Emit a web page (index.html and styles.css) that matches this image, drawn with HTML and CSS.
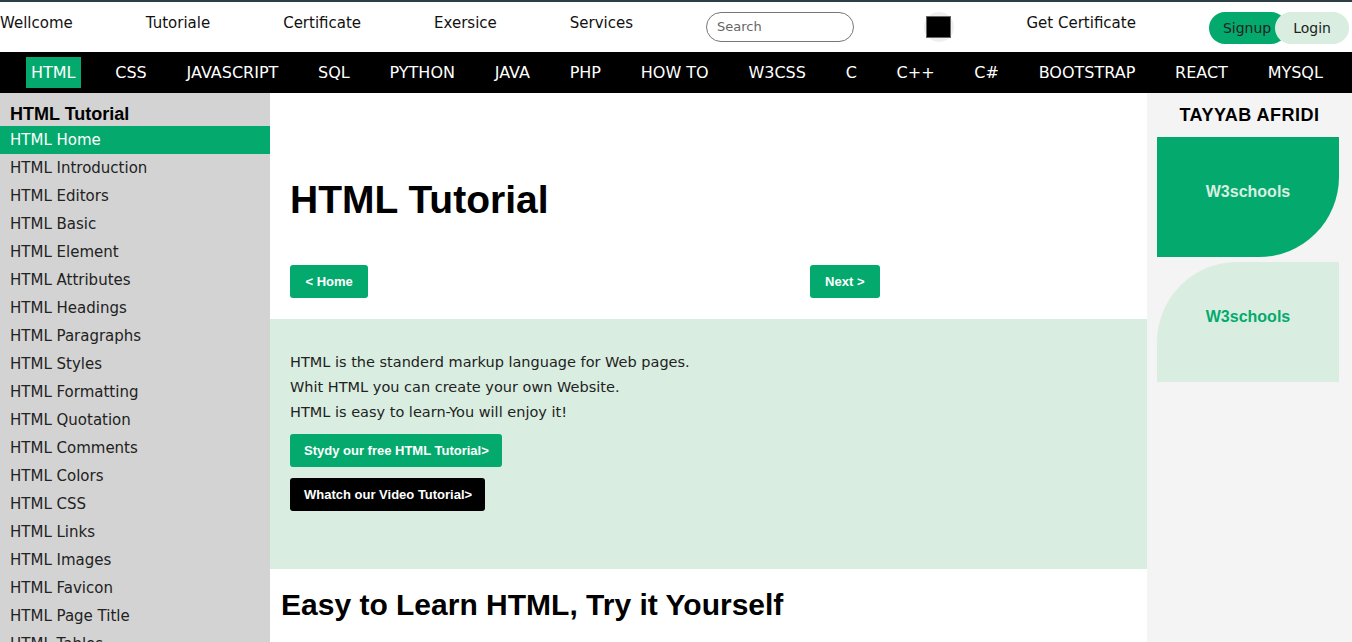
FILE: index.html
```html
<!DOCTYPE html>
<html>
<head>
<meta charset="utf-8">
<title>HTML Tutorial</title>
<link rel="stylesheet" href="styles.css">
</head>
<body>
<header class="topbar">
  <a class="top-link">Wellcome</a>
  <a class="top-link">Tutoriale</a>
  <a class="top-link">Certificate</a>
  <a class="top-link">Exersice</a>
  <a class="top-link">Services</a>
  <div class="search">Search</div>
  <div class="swatch-wrap"><div class="swatch"></div></div>
  <a class="top-link">Get Certificate</a>
  <div class="auth">
    <span class="signup">Signup</span>
    <span class="login">Login</span>
  </div>
</header>
<nav class="navbar">
  <a class="nav-item active">HTML</a>
  <a class="nav-item">CSS</a>
  <a class="nav-item">JAVASCRIPT</a>
  <a class="nav-item">SQL</a>
  <a class="nav-item">PYTHON</a>
  <a class="nav-item">JAVA</a>
  <a class="nav-item">PHP</a>
  <a class="nav-item">HOW TO</a>
  <a class="nav-item">W3CSS</a>
  <a class="nav-item">C</a>
  <a class="nav-item">C++</a>
  <a class="nav-item">C#</a>
  <a class="nav-item">BOOTSTRAP</a>
  <a class="nav-item">REACT</a>
  <a class="nav-item">MYSQL</a>
</nav>
<div class="layout">
  <aside class="sidebar">
    <h3 class="side-title">HTML Tutorial</h3>
    <a class="side-item active">HTML Home</a>
    <a class="side-item">HTML Introduction</a>
    <a class="side-item">HTML Editors</a>
    <a class="side-item">HTML Basic</a>
    <a class="side-item">HTML Element</a>
    <a class="side-item">HTML Attributes</a>
    <a class="side-item">HTML Headings</a>
    <a class="side-item">HTML Paragraphs</a>
    <a class="side-item">HTML Styles</a>
    <a class="side-item">HTML Formatting</a>
    <a class="side-item">HTML Quotation</a>
    <a class="side-item">HTML Comments</a>
    <a class="side-item">HTML Colors</a>
    <a class="side-item">HTML CSS</a>
    <a class="side-item">HTML Links</a>
    <a class="side-item">HTML Images</a>
    <a class="side-item">HTML Favicon</a>
    <a class="side-item">HTML Page Title</a>
    <a class="side-item">HTML Tables</a>
    <a class="side-item">HTML Lists</a>
  </aside>
  <main class="main">
    <section class="intro">
      <h1 class="title">HTML Tutorial</h1>
      <div class="pager">
        <a class="btn btn-green">&lt; Home</a>
        <a class="btn btn-green">Next &gt;</a>
      </div>
    </section>
    <section class="panel">
      <p class="panel-text">HTML is the standerd markup language for Web pages.</p>
      <p class="panel-text">Whit HTML you can create your own Website.</p>
      <p class="panel-text">HTML is easy to learn-You will enjoy it!</p>
      <div class="panel-actions">
        <a class="btn btn-green btn-wide">Stydy our free HTML Tutorial&gt;</a>
        <a class="btn btn-black btn-wide">Whatch our Video Tutorial&gt;</a>
      </div>
    </section>
    <section class="learn">
      <h2 class="subtitle">Easy to Learn HTML, Try it Yourself</h2>
    </section>
  </main>
  <aside class="rightbar">
    <h3 class="right-title">TAYYAB AFRIDI</h3>
    <div class="promo promo-green">W3schools</div>
    <div class="promo promo-light">W3schools</div>
  </aside>
</div>
</body>
</html>
```
FILE: styles.css
```css
* { box-sizing: border-box; }
html, body { margin: 0; padding: 0; }
body {
  font-family: "DejaVu Sans", sans-serif;
  color: #000;
  background: #fff;
  overflow: hidden;
  height: 642px;
  border-top: 2px solid #2e3e45;
}
a { text-decoration: none; color: inherit; }

.topbar {
  display: flex;
  align-items: center;
  gap: 73px;
  height: 50px;
  padding-bottom: 2px;
  white-space: nowrap;
}
.top-link {
  font-size: 15px;
  color: #111;
  margin-top: -7px;
}
.search {
  width: 150px;
  height: 30px;
  border: 1px solid #777;
  border-radius: 15px;
  font-size: 13px;
  color: #666;
  padding: 0 10px;
  line-height: 28px;
  margin-top: 2px;
}
.swatch-wrap {
  width: 30px;
  height: 30px;
  border-radius: 50%;
  background: #efefef;
  display: flex;
  align-items: center;
  justify-content: center;
  margin-left: -3px;
  margin-top: 2px;
}
.swatch {
  width: 25px;
  height: 22px;
  background: #000;
  border: 1px solid #666;
}
.auth {
  display: flex;
  height: 32px;
  margin-left: auto;
  margin-right: 3px;
  margin-top: 4px;
}
.signup, .login {
  font-size: 14px;
  line-height: 32px;
  border-radius: 16px;
  color: #222;
}
.signup {
  background: #04aa6d;
  padding: 0 16px 0 14px;
}
.login {
  background: #d9eee1;
  padding: 0 18px;
  margin-left: -12px;
}

.navbar {
  display: flex;
  justify-content: space-between;
  align-items: center;
  background: #000;
  height: 41px;
  padding: 0 24px 0 26px;
}
.nav-item {
  color: #fff;
  font-size: 16px;
  padding: 0 5px;
  line-height: 31px;
}
.nav-item.active { background: #04aa6d; }

.layout {
  display: flex;
  height: 549px;
}
.sidebar {
  width: 270px;
  flex: none;
  background: #d3d3d3;
  padding-top: 10px;
  overflow: hidden;
}
.side-title {
  margin: 0;
  padding-left: 10px;
  font-family: "Liberation Sans", sans-serif;
  font-size: 18px;
  font-weight: bold;
  line-height: 23px;
}
.side-item {
  display: block;
  font-size: 15px;
  color: #222;
  padding-left: 10px;
  line-height: 28px;
}
.side-item.active { background: #04aa6d; color: #fff; }

.main {
  flex: 1;
  display: flex;
  flex-direction: column;
}
.intro {
  height: 226px;
  padding: 82px 20px 0;
}
.title {
  margin: 0;
  font-family: "Liberation Sans", sans-serif;
  font-size: 39px;
  line-height: 50px;
  font-weight: bold;
}
.pager {
  display: flex;
  justify-content: space-between;
  width: 590px;
  margin-top: 40px;
}
.btn {
  display: inline-block;
  font-family: "Liberation Sans", sans-serif;
  font-weight: bold;
  font-size: 13px;
  color: #fff;
  line-height: 33px;
  padding: 0 15.5px;
  border-radius: 3px;
}
.btn-green { background: #04aa6d; }
.btn-black { background: #000; }
.btn-wide { padding: 0 13px 0 14px; }
.panel {
  background: #d9eee1;
  height: 250px;
  padding: 31px 20px 0;
}
.panel-text {
  margin: 0;
  font-size: 14.5px;
  line-height: 25px;
  color: #222;
}
.panel-actions {
  display: flex;
  flex-direction: column;
  align-items: flex-start;
  gap: 11px;
  margin-top: 9px;
}
.learn { padding: 16px 11px; }
.subtitle {
  margin: 0;
  font-family: "Liberation Sans", sans-serif;
  font-size: 30px;
  font-weight: bold;
  line-height: 40px;
}

.rightbar {
  width: 205px;
  flex: none;
  background: #f4f4f4;
  padding-top: 12px;
}
.right-title {
  margin: 0 0 12px;
  text-align: center;
  font-family: "Liberation Sans", sans-serif;
  font-size: 18px;
  line-height: 20px;
  font-weight: bold;
  letter-spacing: 0.5px;
}
.promo {
  width: 182px;
  height: 120px;
  margin: 0 0 5px 10px;
  display: flex;
  align-items: center;
  justify-content: center;
  padding-bottom: 10px;
  font-family: "Liberation Sans", sans-serif;
  font-weight: bold;
  font-size: 16px;
}
.promo-green {
  background: #04aa6d;
  color: #d9eee1;
  border-bottom-right-radius: 80px;
}
.promo-light {
  background: #d9eee1;
  color: #04aa6d;
  border-top-left-radius: 80px;
}
```
